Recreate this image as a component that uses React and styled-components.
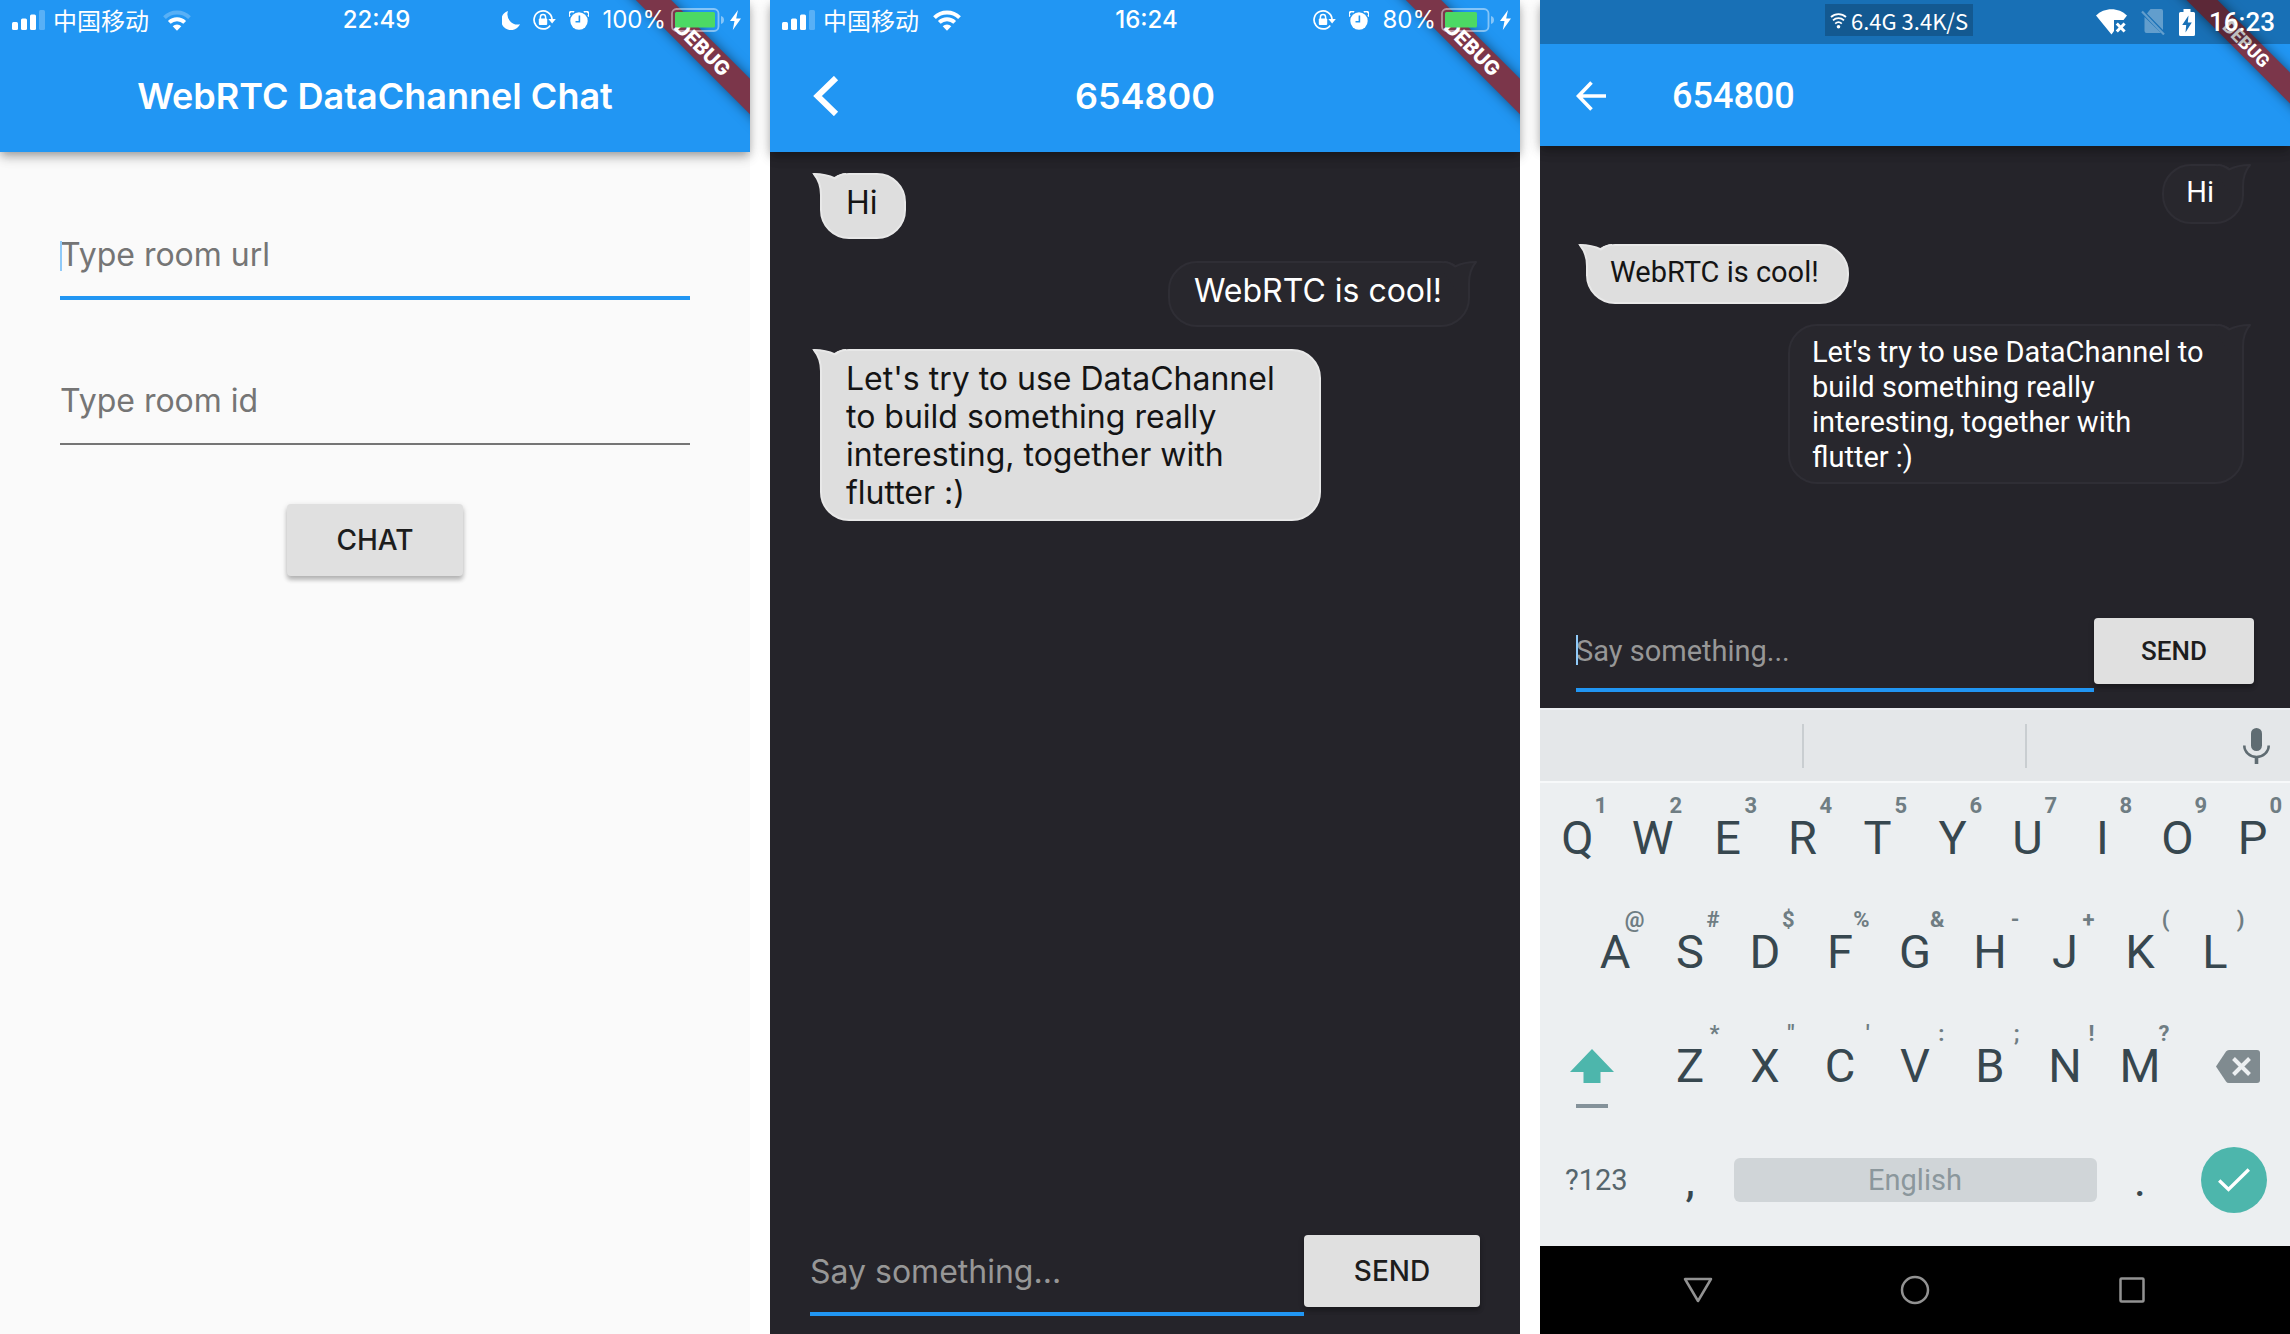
import React from "react";
import styled, { createGlobalStyle, css } from "styled-components";

const IOS_FONT = '"Inter", "Noto Sans CJK SC", sans-serif';
const ANDROID_FONT = '"Roboto", "Noto Sans CJK SC", sans-serif';

const BLUE = "#2196f3";
const INK = "#25242a";
const TEAL = "#4db6ac";

const GlobalStyle = createGlobalStyle`
  *, *::before, *::after { box-sizing: border-box; }
  html, body { margin: 0; background: #fff; }
  button, input { font: inherit; margin: 0; }
  svg { display: block; flex: none; }
`;

const Page = styled.div`
  display: grid;
  grid-template-columns: repeat(3, minmax(0, 1fr));
  gap: 20px;
  min-height: 100vh;
`;

const Screen = styled.section`
  display: flex;
  flex-direction: column;
  min-width: 0;
  background: ${(p) => (p.$dark ? INK : "#fafafa")};
  font-family: ${(p) => (p.$android ? ANDROID_FONT : IOS_FONT)};
`;

/* ---------- header ---------- */

const Header = styled.header`
  position: relative;
  z-index: 1;
  background: ${BLUE};
  color: #fff;
  box-shadow: 0 4px 8px -2px rgba(0, 0, 0, 0.22), 0 6px 10px rgba(0, 0, 0, 0.14),
    0 2px 16px rgba(0, 0, 0, 0.12);
`;

const RibbonCorner = styled.div`
  position: absolute;
  top: 0;
  right: 0;
  width: 144px;
  height: 144px;
  overflow: hidden;
`;

const ribbonPlace = {
  ios: css`
    top: 36px;
    right: -52px;
    height: 25px;
    font-size: 20px;
    line-height: 25px;
  `,
  android: css`
    top: 33px;
    right: -56px;
    height: 22px;
    font-size: 18px;
    line-height: 22px;
  `,
};

const RibbonBand = styled.div`
  position: absolute;
  width: 200px;
  transform: rotate(45deg);
  background: #7b364a;
  box-shadow: 0 0 12px rgba(0, 0, 0, 0.5);
  text-align: center;
  font-weight: 800;
  ${(p) => ribbonPlace[p.$kind]}
`;

function DebugRibbon({ kind }) {
  return (
    <RibbonCorner>
      <RibbonBand $kind={kind}>DEBUG</RibbonBand>
    </RibbonCorner>
  );
}

const IosStatus = styled.div`
  position: relative;
  display: grid;
  grid-template-columns: 1fr auto 1fr;
  align-items: center;
  height: 40px;
  padding: 0 9px 0 12px;
  font-size: 24px;
  line-height: 30px;
`;

const StatusGroup = styled.div`
  display: flex;
  align-items: center;
  gap: ${(p) => p.$gap}px;
  justify-content: ${(p) => (p.$end ? "flex-end" : "flex-start")};
`;

const Carrier = styled.span`
  padding-right: 6px;
  font-family: "Noto Sans CJK SC", sans-serif;
  font-weight: 400;
`;

const Clock = styled.time`
  font-weight: 500;
`;

const Toolbar = styled.div`
  position: relative;
  display: grid;
  grid-template-columns: 1fr auto 1fr;
  align-items: center;
  height: 112px;
  padding: 0 43px;
`;

const Title = styled.h1`
  grid-column: 2;
  margin: 0;
  font-size: 36px;
  line-height: 48px;
  font-weight: 600;
  white-space: nowrap;
`;

const IconButton = styled.button`
  display: flex;
  align-items: center;
  justify-content: center;
  padding: 0;
  border: 0;
  background: none;
  color: inherit;
  cursor: pointer;
  justify-self: start;
`;

const AndroidStatus = styled.div`
  position: relative;
  display: flex;
  align-items: center;
  height: 44px;
  padding: 0 15px 0 38%;
  background: rgba(0, 0, 0, 0.25);
  font-size: 26px;
  line-height: 30px;
`;

const NetSpeed = styled.div`
  display: flex;
  align-items: center;
  align-self: flex-start;
  gap: 4px;
  height: 32px;
  margin-top: 4px;
  padding: 0 5px;
  background: rgba(0, 0, 0, 0.2);
  font-family: "Noto Sans CJK SC", sans-serif;
  font-size: 22px;
  line-height: 32px;
  white-space: nowrap;
`;

const AndroidTray = styled.div`
  display: flex;
  align-items: center;
  gap: 14px;
  margin-left: auto;
`;

const AndroidToolbar = styled.div`
  display: flex;
  align-items: center;
  gap: 66px;
  height: 102px;
  padding: 2px 36px 0;
`;

const AndroidTitle = styled.h1`
  margin: 0;
  font-size: 36px;
  line-height: 44px;
  font-weight: 500;
`;

/* ---------- form controls ---------- */

const RoomForm = styled.form`
  display: flex;
  flex-direction: column;
  align-items: center;
  gap: 59px;
  padding: 62px 60px;
`;

const Field = styled.label`
  position: relative;
  display: block;
  flex: 1;
  width: 100%;
  min-width: 0;
`;

const Caret = styled.span`
  position: absolute;
  top: calc(50% - 16px);
  left: 0;
  width: 2px;
  height: 30px;
  background: #90caf9;
`;

const LineInput = styled.input`
  display: block;
  width: 100%;
  height: 86px;
  padding: 0 0 2px;
  border: 0;
  border-bottom: ${(p) => (p.$active ? `4px solid ${BLUE}` : "2px solid #757575")};
  border-radius: 0;
  outline: 0;
  background: transparent;
  color: #212121;
  font-size: 32px;
  &::placeholder {
    color: #757575;
    opacity: 1;
  }
`;

const MessageInput = styled.input`
  display: block;
  width: 100%;
  height: ${(p) => (p.$android ? 74 : 82)}px;
  padding: 0;
  border: 0;
  border-radius: 0;
  outline: 0;
  background: transparent;
  box-shadow: 0 4px 0 ${BLUE};
  color: #fff;
  font-size: ${(p) => (p.$android ? 29 : 32)}px;
  &::placeholder {
    color: #979797;
    opacity: 1;
  }
`;

const RaisedButton = styled.button`
  flex: none;
  width: ${(p) => (p.$android ? 160 : 176)}px;
  height: ${(p) => (p.$android ? 66 : 72)}px;
  padding: 0;
  border: 0;
  border-radius: 4px;
  background: #e0e0e0;
  box-shadow: 0 4px 4px rgba(0, 0, 0, 0.2), 0 2px 6px rgba(0, 0, 0, 0.14);
  color: #1d1d1d;
  font-size: ${(p) => (p.$android ? 26 : 28)}px;
  font-weight: 500;
  cursor: pointer;
`;

const Composer = styled.form`
  display: flex;
  align-items: center;
  padding: ${(p) => (p.$android ? "0 36px 20px" : "0 40px 22px")};
`;

/* ---------- messages ---------- */

const Messages = styled.ol`
  display: flex;
  flex: 1;
  flex-direction: column;
  gap: ${(p) => (p.$android ? 20 : 22)}px;
  margin: 0;
  padding: ${(p) => (p.$android ? "18px 46px" : "21px 50px")};
  list-style: none;
  font-size: ${(p) => (p.$android ? 29 : 32)}px;
  line-height: ${(p) => (p.$android ? 35 : 38)}px;
`;

const BubbleBox = styled.li`
  position: relative;
  align-self: ${(p) => (p.$own ? "flex-end" : "flex-start")};
  max-width: ${(p) => (p.$android ? 456 : 501)}px;
  min-height: ${(p) => (p.$android ? 60 : 66)}px;
  padding: ${(p) => (p.$android ? "9px 28px 7px 22px" : "9px 26px 7px 24px")};
  border: 2px solid ${(p) => (p.$own ? "#2f2e35" : "#e8e8e8")};
  border-radius: 29px;
  background: ${(p) => (p.$own ? "#28272d" : "#dedede")};
  color: ${(p) => (p.$own ? "#fff" : "#141414")};
`;

const Tail = styled.svg`
  position: absolute;
  top: -2px;
  ${(p) => (p.$own ? "right: -10px; transform: scaleX(-1);" : "left: -10px;")}
`;

function Bubble({ own, android, children }) {
  const fill = own ? "#28272d" : "#dedede";
  const edge = own ? "#2f2e35" : "#e8e8e8";
  return (
    <BubbleBox $own={own} $android={android}>
      <Tail $own={own} width="34" height="32" viewBox="0 0 34 32" aria-hidden="true">
        <path d="M0 0C9 1 18 3 23 5.500C26 3 29 1 34 1L34 12L20 32L9 32L9 22C9 13 6 6 0 0Z" fill={fill} />
        <path
          d="M34 1C29 1 26 3 23 5.500C18 3 11 1 2 1C7 7 9 13 9 22L9 32"
          fill="none"
          stroke={edge}
          strokeWidth="2"
          strokeLinejoin="round"
        />
      </Tail>
      {children}
    </BubbleBox>
  );
}

/* ---------- keyboard ---------- */

const Keyboard = styled.div`
  padding-bottom: 9px;
  background: #eceff1;
`;

const Suggestions = styled.div`
  display: grid;
  grid-template-columns: 264px 223px 1fr;
  align-items: center;
  height: 75px;
  margin-bottom: -2px;
  border-top: 2px solid #eceff1;
  border-bottom: 2px solid #f7f9fa;
  background: #e4e7e9;
  & > * {
    height: 44px;
  }
`;

const Slot = styled.div`
  border-right: 2px solid #c9ced1;
`;

const MicButton = styled(IconButton)`
  justify-self: end;
  padding: 0 20px;
`;

const KeyRow = styled.div`
  display: flex;
  justify-content: center;
  height: 114px;
`;

const Key = styled.button`
  display: grid;
  flex: 0 0 ${(p) => p.$span || 10}%;
  grid-template: 100% / 100%;
  align-items: center;
  justify-items: center;
  padding: 0;
  border: 0;
  background: none;
  color: ${(p) => (p.$small ? "#56666d" : "#37474f")};
  font-size: ${(p) => (p.$small ? 29 : 47)}px;
  line-height: 54px;
  cursor: pointer;
  & > * {
    grid-area: 1 / 1;
  }
`;

const BackspaceKey = styled(Key)`
  padding-left: 8px;
`;

const Hint = styled.span`
  align-self: start;
  justify-self: end;
  padding: 12px 8px 0 0;
  color: #6f7d83;
  font-size: 22px;
  line-height: 26px;
  font-weight: 700;
`;

const ShiftFace = styled.span`
  display: flex;
  flex-direction: column;
  align-items: center;
  gap: 21px;
  padding: 25px 8px 0 0;
  &::after {
    content: "";
    width: 32px;
    height: 4px;
    background: #84929a;
  }
`;

const SpaceBar = styled.span`
  width: calc(100% - 12px);
  height: 44px;
  border-radius: 6px;
  background: #d0d5d8;
  color: #8b979c;
  font-size: 29px;
  line-height: 44px;
`;

const EnterFace = styled.span`
  display: flex;
  align-items: center;
  justify-content: center;
  width: 66px;
  height: 66px;
  border-radius: 50%;
  background: ${TEAL};
`;

const NavBar = styled.nav`
  display: grid;
  grid-template-columns: repeat(3, 1fr);
  height: 88px;
  padding: 0 50px;
  background: #000;
  color: #929292;
`;

const NavButton = styled(IconButton)`
  justify-self: stretch;
`;

/* ---------- drawings ---------- */

const SignalBars = () => (
  <svg width="33" height="20" viewBox="0 0 33 20" fill="#fff" aria-hidden="true">
    <rect x="0" y="12" width="6" height="8" rx="1.500" />
    <rect x="9" y="8.500" width="6" height="11.500" rx="1.500" />
    <rect x="18" y="4.500" width="6" height="15.500" rx="1.500" />
    <rect x="27" y="0" width="6" height="20" rx="1.500" opacity=".25" />
  </svg>
);

const Wifi = ({ weak }) => (
  <svg width="28" height="21" viewBox="0 0 28 21" fill="none" stroke="#fff" strokeWidth="4" aria-hidden="true">
    <path d="M1.500 7.600A18 18 0 0 1 26.500 7.600" opacity={weak ? 0.25 : 1} />
    <path d="M6.300 12.400A11.200 11.200 0 0 1 21.700 12.400" />
    <path d="M9.700 16.200A6.200 6.200 0 0 1 18.300 16.200L14 20.800Z" fill="#fff" stroke="none" />
  </svg>
);

const Moon = () => (
  <svg width="18" height="19" viewBox="0 0 18 19" fill="#fff" aria-hidden="true">
    <path d="M6 0A9.800 9.800 0 1 0 18 13.200A10.200 10.200 0 0 1 6 0Z" />
  </svg>
);

const RotationLock = () => (
  <svg width="23" height="20" viewBox="0 0 23 20" fill="none" stroke="#fff" strokeWidth="1.700" aria-hidden="true">
    <path d="M19 9A9 9 0 1 0 17.200 15.400" />
    <path d="M15.400 9H22.800L19.100 13.400Z" fill="#fff" stroke="none" />
    <path d="M7.400 9V7.200A2.600 2.600 0 0 1 12.600 7.200V9" strokeWidth="1.500" />
    <rect x="5.800" y="8.500" width="8.400" height="6.500" rx="1" fill="#fff" stroke="none" />
  </svg>
);

const Alarm = () => (
  <svg width="20" height="19" viewBox="0 0 20 19" aria-hidden="true">
    <circle cx="10" cy="10" r="8.700" fill="#fff" />
    <path d="M10.400 4.500V10.700H6.500" fill="none" stroke={BLUE} strokeWidth="1.600" />
    <path d="M1 5.400A2.600 2.600 0 0 1 5 1.200M19 5.400A2.600 2.600 0 0 0 15 1.200" fill="none" stroke="#fff" strokeWidth="1.800" />
  </svg>
);

const Battery = ({ level }) => (
  <svg width="54" height="24" viewBox="0 0 54 24" aria-hidden="true">
    <rect x="1" y="1" width="46.500" height="22" rx="4.500" fill="none" stroke="#fff" strokeOpacity=".45" strokeWidth="1.800" />
    <path d="M50 8C52.600 9 53 10.500 53 12C53 13.500 52.600 15 50 16Z" fill="#fff" opacity=".45" />
    <rect x="4" y="4" width={level * 0.4} height="15.500" rx="1.500" fill="#4cd964" />
  </svg>
);

const Bolt = () => (
  <svg width="11" height="20" viewBox="0 0 11 20" fill="#fff" aria-hidden="true">
    <path d="M8 0L0 11H4.500L2.800 20L11 8.500H6.200Z" />
  </svg>
);

const IosBack = () => (
  <svg width="26" height="40" viewBox="0 0 26 40" fill="none" stroke="#fff" strokeWidth="6" aria-hidden="true">
    <path d="M23 2L4.500 20L23 38" />
  </svg>
);

const AndroidBack = () => (
  <svg width="30" height="30" viewBox="0 0 30 30" fill="none" stroke="#fff" strokeWidth="3.600" aria-hidden="true">
    <path d="M30 15H3.500M15.500 1.600L2.500 15L15.500 28.400" />
  </svg>
);

const MiniWifi = () => (
  <svg width="17" height="17" viewBox="0 0 17 17" fill="none" stroke="#fff" strokeWidth="1.800" aria-hidden="true">
    <path d="M1 5A11 11 0 0 1 16 5M3 8.300A8 8 0 0 1 14 8.300M5.200 11.600A5 5 0 0 1 11.800 11.600" />
    <circle cx="8.500" cy="14.800" r="1.800" fill="#fff" stroke="none" />
  </svg>
);

const WifiOff = () => (
  <svg width="31" height="26" viewBox="0 0 31 26" aria-hidden="true">
    <path d="M0 6.500C8 -2 23 -2 31 6.500L27.500 11H18V22L15.500 25.500Z" fill="#fff" />
    <path d="M20.800 14.500L28.600 22.500M28.600 14.500L20.800 22.500" stroke="#fff" strokeWidth="3" />
  </svg>
);

const SimOff = () => (
  <svg width="24" height="26" viewBox="0 0 24 26" opacity=".32" aria-hidden="true">
    <path d="M9.500 0H20A2 2 0 0 1 22 2V21L6 4.500ZM3.500 8L20 24H5.500A2 2 0 0 1 3.500 22Z" fill="#fff" />
    <path d="M1 2.500L23 25.500" stroke="#fff" strokeWidth="2.200" />
  </svg>
);

const AndroidBattery = () => (
  <svg width="16" height="27" viewBox="0 0 16 27" aria-hidden="true">
    <path d="M4.500 0H11.500V3H14.500A1.500 1.500 0 0 1 16 4.500V25.500A1.500 1.500 0 0 1 14.500 27H1.500A1.500 1.500 0 0 1 0 25.500V4.500A1.500 1.500 0 0 1 1.500 3H4.500Z" fill="#fff" />
    <path d="M9.500 6.500L3.200 16H7.200L6.500 23.500L12.800 13.500H8.800Z" fill="#1971b6" />
  </svg>
);

const Mic = () => (
  <svg width="27" height="36" viewBox="0 0 27 36" fill="none" stroke="#5f6c72" strokeWidth="2.600" aria-hidden="true">
    <rect x="8" y="0" width="11" height="23" rx="5.500" fill="#5f6c72" stroke="none" />
    <path d="M1.300 17.500A12.200 11.500 0 0 0 25.700 17.500" />
    <path d="M13.500 29V36" strokeWidth="3.600" />
  </svg>
);

const ShiftArrow = () => (
  <svg width="44" height="34" viewBox="0 0 44 34" fill={TEAL} aria-hidden="true">
    <path d="M22 0L44 23H30.500V34H13.500V23H0Z" />
  </svg>
);

const Backspace = () => (
  <svg width="44" height="33" viewBox="0 0 44 33" aria-hidden="true">
    <path d="M13 0H41A3 3 0 0 1 44 3V30A3 3 0 0 1 41 33H13Q11 33 10 31.500L0 16.500L10 1.500Q11 0 13 0Z" fill="#808b90" />
    <path d="M17.500 8.500L33.500 24.500M33.500 8.500L17.500 24.500" stroke="#eceff1" strokeWidth="4" />
  </svg>
);

const Check = () => (
  <svg width="32" height="24" viewBox="0 0 32 24" fill="none" stroke="#fff" strokeWidth="3.400" aria-hidden="true">
    <path d="M1.200 12.500L10.500 21.400L30.800 1.500" />
  </svg>
);

const NavIcon = ({ children }) => (
  <svg width="30" height="30" viewBox="0 0 30 30" fill="none" stroke="currentColor" strokeWidth="2.500" strokeLinejoin="round" aria-hidden="true">
    {children}
  </svg>
);

/* ---------- screens ---------- */

function IosStatusBar({ time, charge, moon, weakWifi }) {
  return (
    <IosStatus>
      <StatusGroup $gap={8}>
        <SignalBars />
        <Carrier>中国移动</Carrier>
        <Wifi weak={weakWifi} />
      </StatusGroup>
      <Clock>{time}</Clock>
      <StatusGroup $gap={13} $end>
        {moon && <Moon />}
        <RotationLock />
        <Alarm />
        <StatusGroup $gap={5}>
          <span>{charge}%</span>
          <Battery level={charge} />
          <Bolt />
        </StatusGroup>
      </StatusGroup>
    </IosStatus>
  );
}

function RoomScreen() {
  return (
    <Screen>
      <Header>
        <DebugRibbon kind="ios" />
        <IosStatusBar time="22:49" charge={100} moon weakWifi />
        <Toolbar>
          <Title>WebRTC DataChannel Chat</Title>
        </Toolbar>
      </Header>
      <RoomForm onSubmit={(e) => e.preventDefault()}>
        <Field>
          <LineInput $active placeholder="Type room url" aria-label="Type room url" />
          <Caret />
        </Field>
        <Field>
          <LineInput placeholder="Type room id" aria-label="Type room id" />
        </Field>
        <RaisedButton type="submit">CHAT</RaisedButton>
      </RoomForm>
    </Screen>
  );
}

function IosChatScreen() {
  return (
    <Screen $dark>
      <Header>
        <DebugRibbon kind="ios" />
        <IosStatusBar time="16:24" charge={80} />
        <Toolbar>
          <IconButton aria-label="Back">
            <IosBack />
          </IconButton>
          <Title>654800</Title>
        </Toolbar>
      </Header>
      <Messages>
        <Bubble>Hi</Bubble>
        <Bubble own>WebRTC is cool!</Bubble>
        <Bubble>Let's try to use DataChannel to build something really interesting, together with flutter :)</Bubble>
      </Messages>
      <Composer onSubmit={(e) => e.preventDefault()}>
        <Field>
          <MessageInput placeholder="Say something..." aria-label="Say something" />
        </Field>
        <RaisedButton type="submit">SEND</RaisedButton>
      </Composer>
    </Screen>
  );
}

const ROW_1 = [["Q", "1"], ["W", "2"], ["E", "3"], ["R", "4"], ["T", "5"], ["Y", "6"], ["U", "7"], ["I", "8"], ["O", "9"], ["P", "0"]];
const ROW_2 = [["A", "@"], ["S", "#"], ["D", "$"], ["F", "%"], ["G", "&"], ["H", "-"], ["J", "+"], ["K", "("], ["L", ")"]];
const ROW_3 = [["Z", "*"], ["X", '"'], ["C", "'"], ["V", ":"], ["B", ";"], ["N", "!"], ["M", "?"]];

const letterKeys = (keys) =>
  keys.map(([letter, hint]) => (
    <Key key={letter} type="button">
      <span>{letter}</span>
      <Hint>{hint}</Hint>
    </Key>
  ));

function AndroidKeyboard() {
  return (
    <Keyboard>
      <Suggestions>
        <Slot />
        <Slot />
        <MicButton aria-label="Voice input">
          <Mic />
        </MicButton>
      </Suggestions>
      <KeyRow>{letterKeys(ROW_1)}</KeyRow>
      <KeyRow>{letterKeys(ROW_2)}</KeyRow>
      <KeyRow>
        <Key type="button" $span={15} aria-label="Shift">
          <ShiftFace>
            <ShiftArrow />
          </ShiftFace>
        </Key>
        {letterKeys(ROW_3)}
        <BackspaceKey type="button" $span={15} aria-label="Backspace">
          <Backspace />
        </BackspaceKey>
      </KeyRow>
      <KeyRow>
        <Key type="button" $span={15} $small>?123</Key>
        <Key type="button">,</Key>
        <Key type="button" $span={50}>
          <SpaceBar>English</SpaceBar>
        </Key>
        <Key type="button">.</Key>
        <Key type="button" $span={15} aria-label="Done">
          <EnterFace>
            <Check />
          </EnterFace>
        </Key>
      </KeyRow>
    </Keyboard>
  );
}

function AndroidChatScreen() {
  return (
    <Screen $dark $android>
      <Header>
        <DebugRibbon kind="android" />
        <AndroidStatus>
          <NetSpeed>
            <MiniWifi />
            <span>6.4G 3.4K/S</span>
          </NetSpeed>
          <AndroidTray>
            <WifiOff />
            <SimOff />
            <AndroidBattery />
            <Clock>16:23</Clock>
          </AndroidTray>
        </AndroidStatus>
        <AndroidToolbar>
          <IconButton aria-label="Back">
            <AndroidBack />
          </IconButton>
          <AndroidTitle>654800</AndroidTitle>
        </AndroidToolbar>
      </Header>
      <Messages $android>
        <Bubble android own>Hi</Bubble>
        <Bubble android>WebRTC is cool!</Bubble>
        <Bubble android own>Let's try to use DataChannel to build something really interesting, together with flutter :)</Bubble>
      </Messages>
      <Composer $android onSubmit={(e) => e.preventDefault()}>
        <Field>
          <MessageInput $android placeholder="Say something..." aria-label="Say something" />
          <Caret />
        </Field>
        <RaisedButton $android type="submit">SEND</RaisedButton>
      </Composer>
      <AndroidKeyboard />
      <NavBar>
        <NavButton aria-label="Hide keyboard">
          <NavIcon>
            <path d="M2 4H28L15 26Z" />
          </NavIcon>
        </NavButton>
        <NavButton aria-label="Home">
          <NavIcon>
            <circle cx="15" cy="15" r="13" />
          </NavIcon>
        </NavButton>
        <NavButton aria-label="Recent apps">
          <NavIcon>
            <rect x="3.500" y="3.500" width="23" height="23" rx="1" />
          </NavIcon>
        </NavButton>
      </NavBar>
    </Screen>
  );
}

export default function App() {
  return (
    <>
      <GlobalStyle />
      <Page>
        <RoomScreen />
        <IosChatScreen />
        <AndroidChatScreen />
      </Page>
    </>
  );
}
